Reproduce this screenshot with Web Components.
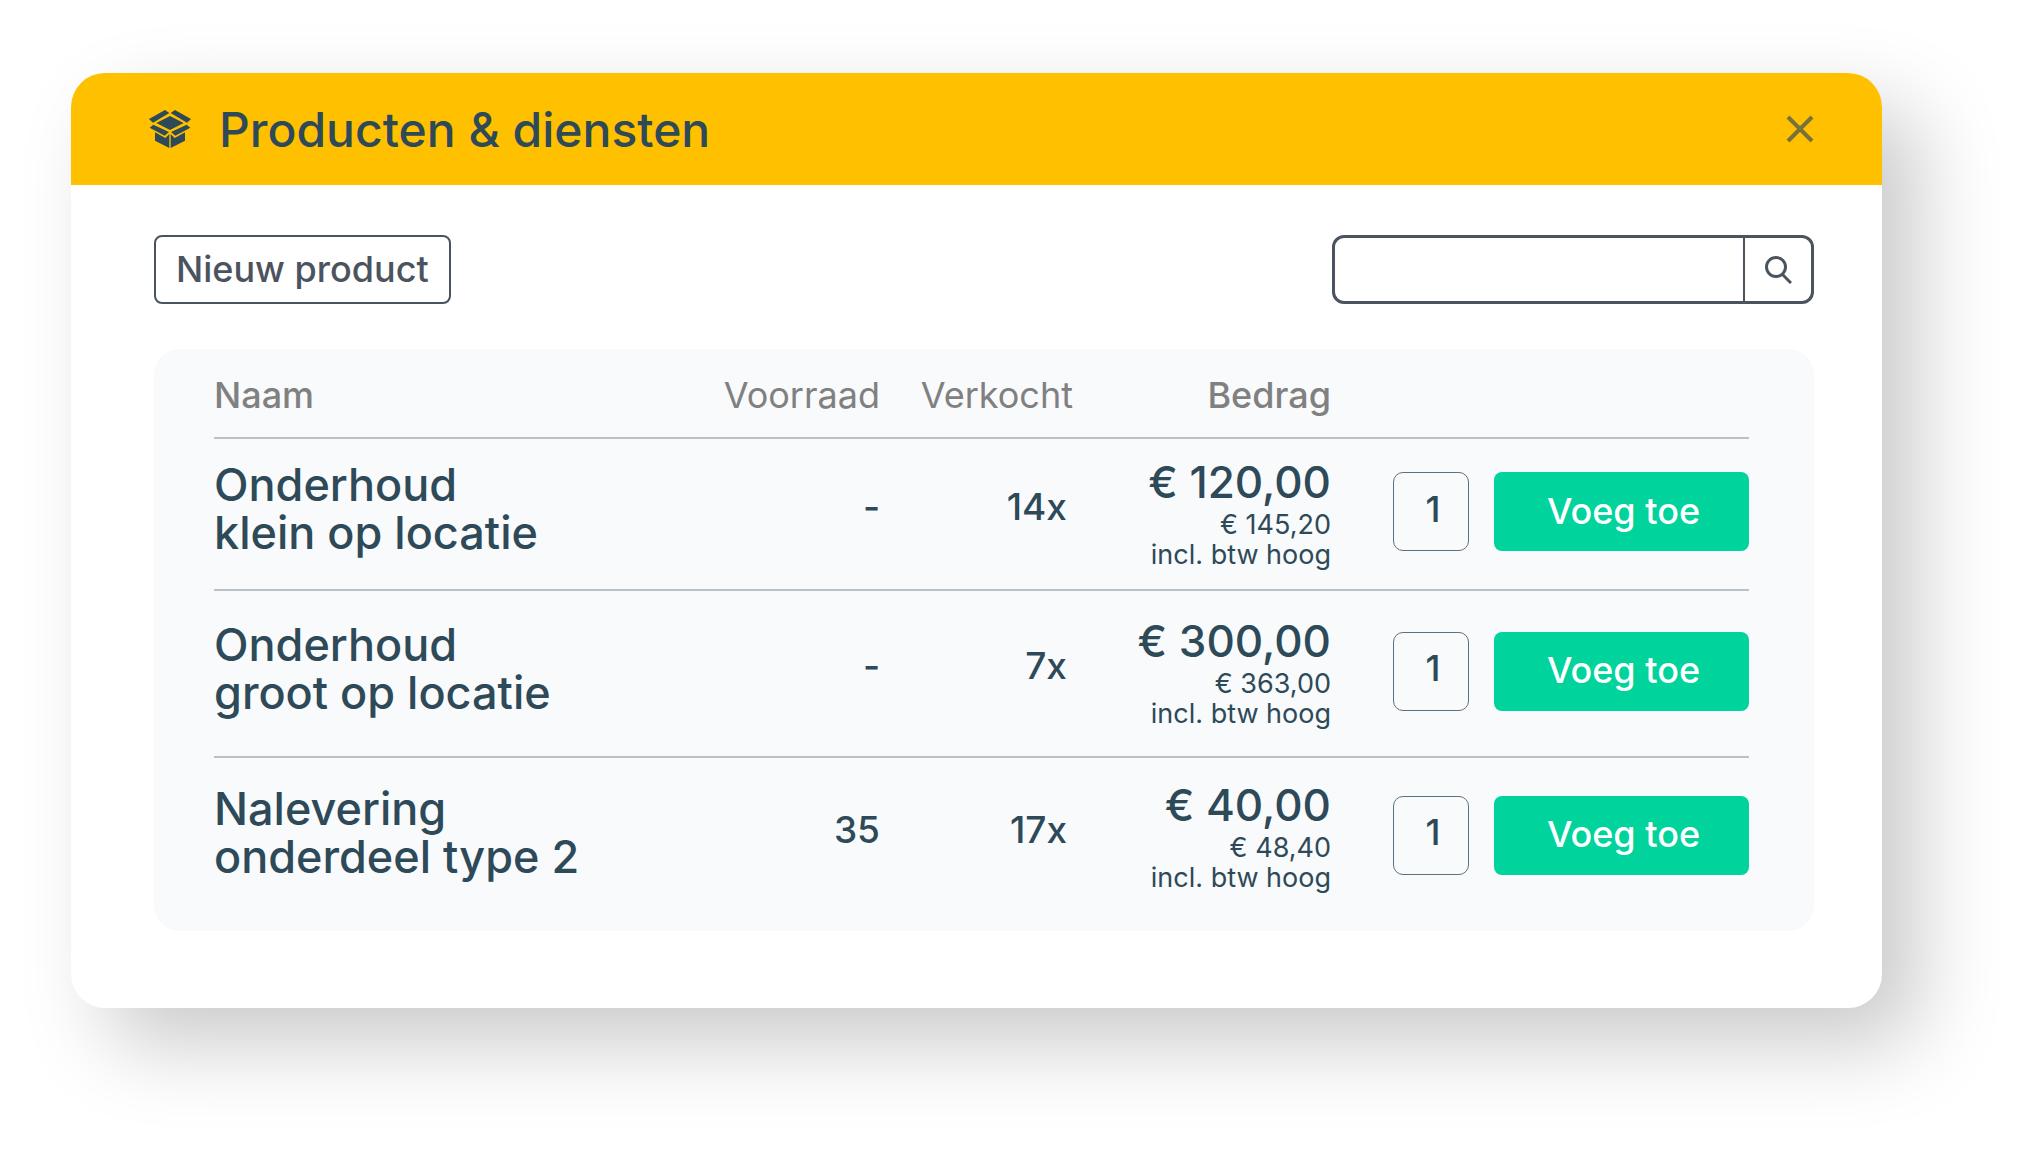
<!DOCTYPE html>
<html lang="nl">
<head>
<meta charset="utf-8">
<meta name="viewport" content="width=device-width, initial-scale=1">
<title>Producten &amp; diensten</title>
<style>
    body {
        margin: 0;
        padding: 73px 144px 144px 71px;
        background: #fff;
        color: #2e4958;
        font-family: Inter, "Liberation Sans", sans-serif;
        font-weight: 500;
        --slate: #4b545e;
        --green: #00d39c;
        --line: #b8c1c9;
    }
</style>
</head>
<body>
<product-window>
    <window-header slot="header">Producten &amp; diensten</window-header>
    <outline-button slot="tools">Nieuw product</outline-button>
    <search-bar slot="tools"></search-bar>
    <product-table></product-table>
</product-window>

<script>
class ProductWindow extends HTMLElement {
    constructor(){
        super();
        this.attachShadow({mode: 'open'}).innerHTML = `
        <style>
        :host {
            display: block;
            background: #fff;
            border-radius: 34px;
            box-shadow: 36px 36px 84px rgba(0, 0, 0, .21);
        }

        main {
            padding: 50px 68px 77px 83px;
        }

        .tools {
            display: flex;
            justify-content: space-between;
            margin-bottom: 45px;
        }
        </style>
        <slot name="header"></slot>
        <main>
            <div class="tools"><slot name="tools"></slot></div>
            <slot></slot>
        </main>
        `;
    }
}

class WindowHeader extends HTMLElement {
    constructor(){
        super();
        this.attachShadow({mode: 'open'}).innerHTML = `
        <style>
        :host {
            display: flex;
            align-items: center;
            height: 112px;
            padding: 0 68px 0 78px;
            background: #ffc000;
            border-radius: 34px 34px 0 0;
        }

        h1 {
            flex: 1;
            margin: 0 0 0 28px;
            font-size: 48px;
            font-weight: 500;
        }

        .box {
            width: 42px;
            height: 38px;
            fill: #2e4958;
        }

        button {
            display: flex;
            padding: 0;
            border: none;
            background: transparent;
            cursor: pointer;
        }

        button svg {
            stroke: #2e4958;
            stroke-width: 4;
            opacity: .65;
        }
        </style>
        <svg class="box" viewBox="0 0 126 114" aria-hidden="true">
            <path d="M0 27 48 0 61 9 12 38z"/>
            <path d="M126 27 78 0 65 9 114 38z"/>
            <path d="M22 39 63 18 104 39 63 60z"/>
            <path d="M13 44 60 66 47 77 2 53z"/>
            <path d="M113 44 66 66 79 77 124 53z"/>
            <path d="M18 67 49 84 61 72V114L18 92z"/>
            <path d="M108 67 77 84 65 72V114L108 92z"/>
        </svg>
        <h1><slot></slot></h1>
        <button type="button" aria-label="Sluiten">
            <svg width="28" height="28" viewBox="0 0 28 28"><path d="M2 2 26 26M26 2 2 26"/></svg>
        </button>
        `;
    }
}

class OutlineButton extends HTMLElement {
    constructor(){
        super();
        this.attachShadow({mode: 'open'}).innerHTML = `
        <style>
        :host {
            display: block;
        }

        button {
            display: block;
            height: 69px;
            padding: 0 20px 2px;
            border: 2px solid var(--slate);
            border-radius: 8px;
            background: #fff;
            color: var(--slate);
            font: inherit;
            font-size: 36px;
            cursor: pointer;
        }
        </style>
        <button type="button"><slot></slot></button>
        `;
    }
}

class SearchBar extends HTMLElement {
    constructor(){
        super();
        this.attachShadow({mode: 'open'}).innerHTML = `
        <style>
        :host {
            display: block;
        }

        form {
            display: flex;
            box-sizing: border-box;
            width: 482px;
            height: 69px;
            border: 3px solid var(--slate);
            border-radius: 12px;
            overflow: hidden;
        }

        input {
            flex: 1;
            min-width: 0;
            padding: 0 16px;
            border: none;
            outline: none;
            background: transparent;
            color: inherit;
            font: inherit;
            font-size: 28px;
        }

        button {
            display: flex;
            align-items: center;
            justify-content: center;
            width: 68px;
            padding: 0;
            border: none;
            border-left: 2px solid var(--slate);
            background: transparent;
            cursor: pointer;
        }

        svg {
            fill: none;
            stroke: var(--slate);
            stroke-width: 3;
        }
        </style>
        <form role="search">
            <input type="text" name="search" aria-label="Zoeken">
            <button type="button" aria-label="Zoek">
                <svg width="28" height="28" viewBox="0 0 28 28"><circle cx="12" cy="11" r="9.500"/><path d="M18 18 27 27"/></svg>
            </button>
        </form>
        `;
    }
}

class QuantityField extends HTMLElement {
    constructor(){
        super();
        this.attachShadow({mode: 'open'}).innerHTML = `
        <style>
        :host {
            display: block;
        }

        input {
            display: block;
            box-sizing: border-box;
            width: 76px;
            height: 79px;
            padding: 0 0 6px 4px;
            border: 1px solid #5d7280;
            border-radius: 10px;
            background: transparent;
            color: inherit;
            font: inherit;
            font-size: 36px;
            text-align: center;
        }
        </style>
        <input type="text" inputmode="numeric" value="1" aria-label="Aantal">
        `;
    }
}

class AddButton extends HTMLElement {
    constructor(){
        super();
        this.attachShadow({mode: 'open'}).innerHTML = `
        <style>
        :host {
            display: block;
        }

        button {
            display: block;
            width: 100%;
            height: 79px;
            padding: 0 0 2px 4px;
            border: none;
            border-radius: 8px;
            background: var(--green);
            color: #fff;
            font: inherit;
            font-size: 36px;
            cursor: pointer;
        }
        </style>
        <button type="button"><slot></slot></button>
        `;
    }
}

class ProductTable extends HTMLElement {
    constructor(){
        super();
        this.attachShadow({mode: 'open'});
        this.products = [
            {name: ["Onderhoud", "klein op locatie"], stock: "-", sold: "14x", price: "€ 120,00", gross: "€ 145,20"},
            {name: ["Onderhoud", "groot op locatie"], stock: "-", sold: "7x", price: "€ 300,00", gross: "€ 363,00"},
            {name: ["Nalevering", "onderdeel type 2"], stock: "35", sold: "17x", price: "€ 40,00", gross: "€ 48,40"}
        ];
    }

    connectedCallback(){
        this.render();
    }

    row(product) {
        return `
        <tr>
            <td class="name">${product.name.join("<br>")}</td>
            <td class="count">${product.stock}</td>
            <td class="count sold">${product.sold}</td>
            <td class="amount">
                <div class="price">${product.price}</div>
                <div class="gross">${product.gross}<br>incl. btw hoog</div>
            </td>
            <td class="quantity"><quantity-field></quantity-field></td>
            <td class="add"><add-button>Voeg toe</add-button></td>
        </tr>`;
    }

    render() {
        this.shadowRoot.innerHTML = `
        <style>
        :host {
            display: block;
            padding: 0 65px 14px 60px;
            border-radius: 26px;
            background: #f8fafc;
        }

        table {
            width: 100%;
            border-collapse: separate;
            border-spacing: 0;
            table-layout: fixed;
        }

        th, td {
            box-sizing: border-box;
            padding: 0;
            text-align: right;
            white-space: nowrap;
        }

        th {
            height: 90px;
            padding-top: 4px;
            border-bottom: 2px solid var(--line);
            color: #808080;
            font-size: 36px;
            font-weight: 500;
        }

        th.light {
            font-weight: 400;
        }

        th:first-child, td.name {
            text-align: left;
        }

        td {
            height: 167px;
            padding-bottom: 5px;
            border-bottom: 2px solid var(--line);
        }

        tr:first-child td {
            height: 152px;
        }

        tr:last-child td {
            height: 159px;
            border-bottom: none;
        }

        td.name {
            padding-bottom: 10px;
            font-size: 45px;
            line-height: 48px;
        }

        td.count {
            padding-bottom: 16px;
            font-size: 37px;
        }

        td.sold {
            padding-right: 6px;
        }

        .price {
            font-size: 44px;
            line-height: 56px;
        }

        .gross {
            font-size: 27px;
            font-weight: 400;
            line-height: 30px;
        }

        td.quantity {
            padding-left: 62px;
        }

        td.add {
            padding-left: 25px;
        }

        .stock-col { width: 236px; }
        .sold-col { width: 193px; }
        .amount-col { width: 258px; }
        .quantity-col { width: 138px; }
        .add-col { width: 280px; }
        </style>
        <table>
            <colgroup>
                <col>
                <col class="stock-col">
                <col class="sold-col">
                <col class="amount-col">
                <col class="quantity-col">
                <col class="add-col">
            </colgroup>
            <thead>
                <tr>
                    <th scope="col">Naam</th>
                    <th scope="col" class="light">Voorraad</th>
                    <th scope="col" class="light">Verkocht</th>
                    <th scope="col">Bedrag</th>
                    <th></th>
                    <th></th>
                </tr>
            </thead>
            <tbody>${this.products.map(product => this.row(product)).join("")}</tbody>
        </table>
        `;
    }
}

customElements.define("product-window", ProductWindow);
customElements.define("window-header", WindowHeader);
customElements.define("outline-button", OutlineButton);
customElements.define("search-bar", SearchBar);
customElements.define("quantity-field", QuantityField);
customElements.define("add-button", AddButton);
customElements.define("product-table", ProductTable);
</script>
</body>
</html>
